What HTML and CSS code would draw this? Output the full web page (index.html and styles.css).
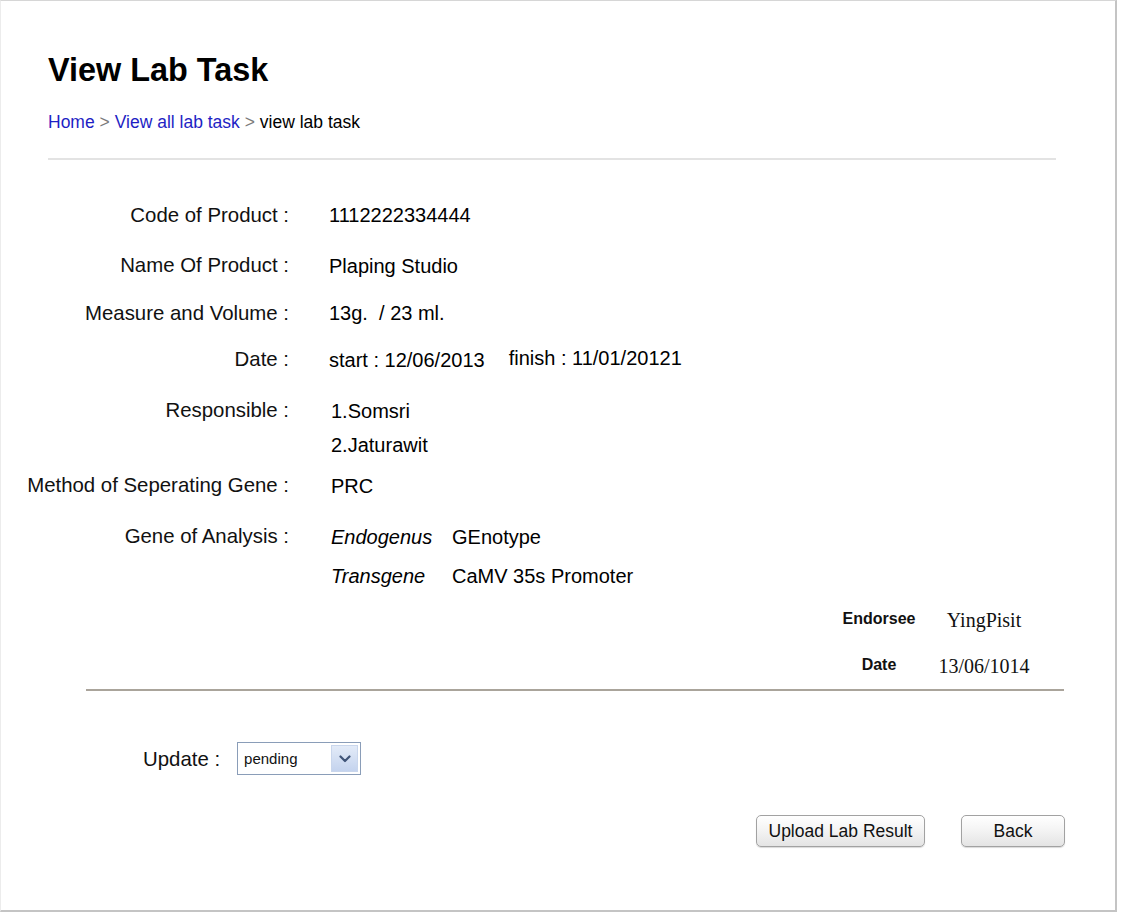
FILE: index.html
```html
<!DOCTYPE html>
<html lang="en">
<head>
<meta charset="utf-8">
<title>View Lab Task</title>
<link rel="stylesheet" href="styles.css">
</head>
<body>
<div class="frame">
  <header class="page-head">
    <h1 class="title">View Lab Task</h1>
    <nav class="crumbs"><a href="#">Home</a> <span class="sep">&gt;</span> <a href="#">View all lab task</a> <span class="sep">&gt;</span> <span class="here">view lab task</span></nav>
    <hr class="rule">
  </header>

  <section class="details">
    <div class="row r-code">
      <div class="label">Code of Product :</div>
      <div class="value">1112222334444</div>
    </div>
    <div class="row r-name">
      <div class="label">Name Of Product :</div>
      <div class="value">Plaping Studio</div>
    </div>
    <div class="row r-measure">
      <div class="label">Measure and Volume :</div>
      <div class="value">13g. &nbsp;/ 23 ml.</div>
    </div>
    <div class="row r-date">
      <div class="label">Date :</div>
      <div class="value"><span>start : 12/06/2013</span><span class="finish">finish : 11/01/20121</span></div>
    </div>
    <div class="row r-resp">
      <div class="label">Responsible :</div>
      <div class="value stack">
        <div class="line">1.Somsri</div>
        <div class="line">2.Jaturawit</div>
      </div>
    </div>
    <div class="row r-method">
      <div class="label">Method of Seperating Gene :</div>
      <div class="value">PRC</div>
    </div>
    <div class="row r-gene">
      <div class="label">Gene of Analysis :</div>
      <div class="value gene-grid">
        <em class="gkind">Endogenus</em><span class="gname">GEnotype</span>
        <em class="gkind">Transgene</em><span class="gname">CaMV 35s Promoter</span>
      </div>
    </div>
  </section>

  <section class="endorse">
    <div class="e-label">Endorsee</div><div class="e-value">YingPisit</div>
    <div class="e-label">Date</div><div class="e-value">13/06/1014</div>
  </section>

  <hr class="divider">

  <section class="update">
    <span class="u-label">Update :</span>
    <div class="select">
      <span class="select-text">pending</span>
      <span class="select-arrow">
        <svg width="12" height="8" viewBox="0 0 12 8"><path d="M1.5 1.5 L6 6 L10.5 1.5" fill="none" stroke="#3f5478" stroke-width="2.2" stroke-linecap="round" stroke-linejoin="round"/></svg>
      </span>
    </div>
  </section>

  <div class="actions">
    <button class="btn btn-upload" type="button">Upload Lab Result</button>
    <button class="btn btn-back" type="button">Back</button>
  </div>
</div>
</body>
</html>
```

FILE: styles.css
```css
* { box-sizing: border-box; }

html, body {
  margin: 0;
  padding: 0;
  background: #ffffff;
}

body {
  font-family: "Liberation Sans", Arial, Helvetica, sans-serif;
  color: #111;
}

.frame {
  width: 1117px;
  height: 912px;
  border-top: 1px solid #d6d6d6;
  border-left: 1px solid #ececec;
  border-right: 2px solid #c4c4c4;
  border-bottom: 2px solid #c4c4c4;
  background: #fff;
}

/* header */
.page-head {
  padding: 50px 59px 0 47px;
}

.title {
  margin: 0;
  font-size: 32.4px;
  line-height: 38px;
  font-weight: bold;
  color: #000;
}

.crumbs {
  margin-top: 22px;
  font-size: 17.5px;
  line-height: 22px;
  color: #000;
}

.crumbs a {
  color: #1f1fc4;
  text-decoration: none;
}

.crumbs .sep {
  color: #7a7a7a;
}

.rule {
  margin: 25px 0 0 0;
  border: 0;
  height: 2px;
  background: #e3e3e3;
}

/* details */
.details {
  font-size: 20px;
  line-height: 24px;
}

.row {
  display: flex;
  gap: 40px;
}

.label {
  width: 288px;
  flex: none;
  text-align: right;
  font-size: 20.4px;
  color: #111;
}

.value {
  color: #000;
}

.r-code { margin-top: 43px; }
.r-name { margin-top: 26px; }
.r-measure { margin-top: 23px; }
.r-date { margin-top: 22px; }
.r-resp { margin-top: 26px; }
.r-method { margin-top: 16px; }
.r-gene { margin-top: 26px; }

.r-name .value,
.r-method .value { padding-top: 1px; }

.r-date .value { display: flex; padding-top: 1px; }
.finish { margin-left: 24px; margin-top: -2px; }

.stack {
  display: flex;
  flex-direction: column;
  gap: 10px;
  padding-left: 2px;
  padding-top: 1px;
}

.r-method .value { padding-left: 2px; }

.gene-grid {
  display: grid;
  grid-template-columns: 121px auto;
  row-gap: 15px;
  padding-left: 2px;
  padding-top: 1px;
}

.gkind { font-style: italic; }

/* endorse */
.endorse {
  margin-top: 19px;
  display: grid;
  grid-template-columns: 110px 100px;
  justify-content: end;
  row-gap: 21px;
  padding-right: 81px;
  line-height: 24px;
}

.e-label {
  font-size: 16px;
  font-weight: bold;
  text-align: center;
  color: #111;
}

.e-value {
  font-family: "Liberation Serif", "Times New Roman", serif;
  font-size: 20px;
  text-align: center;
  padding-top: 1px;
  color: #111;
}

.divider {
  margin: 11px 51px 0 85px;
  border: 0;
  height: 2px;
  background: #aaa49b;
}

/* update */
.update {
  margin-top: 51px;
  padding-left: 142px;
  display: flex;
  align-items: center;
  gap: 17px;
}

.u-label {
  font-size: 20.4px;
  line-height: 24px;
  color: #111;
}

.select {
  width: 124px;
  height: 33px;
  border: 1px solid #8a9db8;
  display: flex;
  align-items: stretch;
  background: #fff;
}

.select-text {
  flex: 1;
  font-size: 15px;
  line-height: 31px;
  padding-left: 6px;
  color: #111;
}

.select-arrow {
  width: 27px;
  margin: 2px;
  border: 1px solid #c9d6ec;
  background: linear-gradient(#e3ebf8, #c4d3ee);
  display: flex;
  align-items: center;
  justify-content: center;
}

/* actions */
.actions {
  margin-top: 40px;
  display: flex;
  justify-content: flex-end;
  gap: 36px;
  padding-right: 50px;
}

.btn {
  height: 32px;
  border: 1px solid #a2a2a2;
  border-radius: 5px;
  background: linear-gradient(#ffffff, #f3f3f3 50%, #e4e4e4);
  box-shadow: 0 1px 1px rgba(0, 0, 0, 0.15);
  font-family: "Liberation Sans", Arial, sans-serif;
  font-size: 17.5px;
  color: #111;
  padding: 0;
}

.btn-upload { width: 169px; }
.btn-back { width: 104px; }
```
